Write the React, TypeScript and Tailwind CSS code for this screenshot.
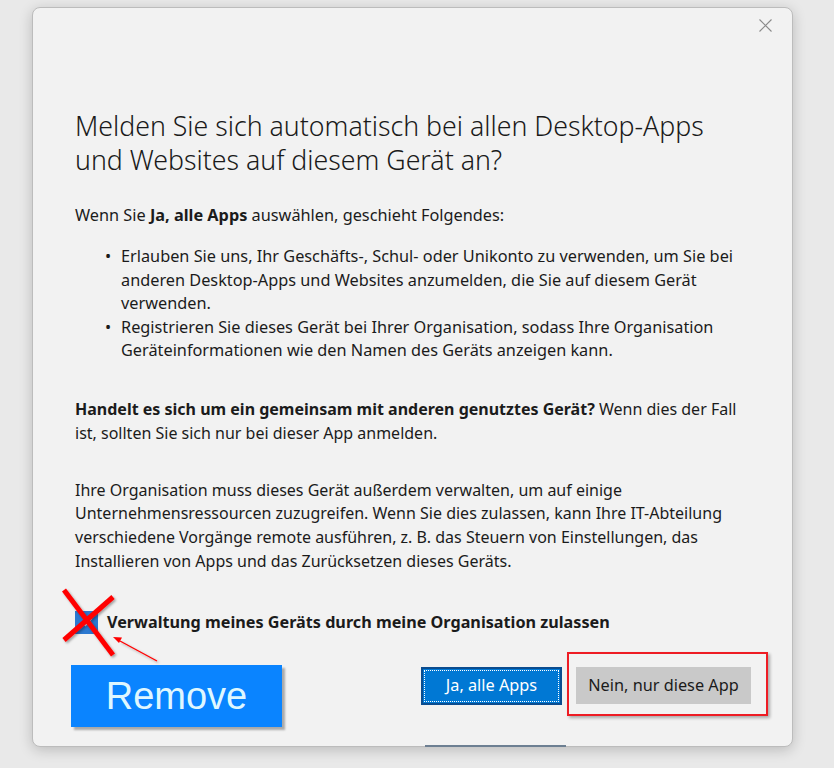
const body = "font-['Noto_Sans',sans-serif]";

function Line({ children, className = "" }: { children: React.ReactNode; className?: string }) {
  return <div className={`whitespace-nowrap ${className}`}>{children}</div>;
}

function Bullet({ lines }: { lines: string[] }) {
  return (
    <li className="flex">
      <span className="w-[16px] shrink-0 -ml-[16px]">•</span>
      <div>
        {lines.map((l) => (
          <Line key={l}>{l}</Line>
        ))}
      </div>
    </li>
  );
}

export default function App() {
  return (
    <div className={`relative w-[834px] h-[768px] overflow-hidden bg-[#e9e9e9] pt-[7px] pl-[32px] ${body} text-[#1b1b1b]`}>
      <div className="relative w-[761px] h-[740px] rounded-[8px] border border-[#bcbcbc] bg-[#f2f2f2] shadow-[0_3px_14px_rgba(0,0,0,0.2)]">
        <div className="flex justify-end pt-[11px] pr-[20px]">
          <svg width="13" height="13" viewBox="0 0 13 13" className="text-[#8a8a8a]">
            <path d="M0.5 0.5 L12.5 12.5 M12.5 0.5 L0.5 12.5" stroke="currentColor" strokeWidth="1.1" fill="none" />
          </svg>
        </div>

        <div className="pl-[42px] pr-[30px]">
          <h1 className="mt-[77px] text-[26.7px] leading-[34px] font-light text-[#1a1a1a]">
            <Line>Melden Sie sich automatisch bei allen Desktop-Apps</Line>
            <Line>und Websites auf diesem Gerät an?</Line>
          </h1>

          <div className="mt-[27px] text-[16.3px] leading-[23.5px]">
            <Line>
              Wenn Sie <b className="font-bold">Ja, alle Apps</b> auswählen, geschieht Folgendes:
            </Line>
          </div>

          <ul className="mt-[17.5px] pl-[46px] text-[16.3px] leading-[23.5px]">
            <Bullet
              lines={[
                "Erlauben Sie uns, Ihr Geschäfts-, Schul- oder Unikonto zu verwenden, um Sie bei",
                "anderen Desktop-Apps und Websites anzumelden, die Sie auf diesem Gerät",
                "verwenden.",
              ]}
            />
            <Bullet
              lines={[
                "Registrieren Sie dieses Gerät bei Ihrer Organisation, sodass Ihre Organisation",
                "Geräteinformationen wie den Namen des Geräts anzeigen kann.",
              ]}
            />
          </ul>

          <div className="mt-[34px] text-[16px] leading-[24px]">
            <Line>
              <b className="font-bold">Handelt es sich um ein gemeinsam mit anderen genutztes Gerät?</b> Wenn dies der Fall
            </Line>
            <Line>ist, sollten Sie sich nur bei dieser App anmelden.</Line>
          </div>

          <div className="mt-[34px] text-[16px] leading-[23.7px]">
            <Line>Ihre Organisation muss dieses Gerät außerdem verwalten, um auf einige</Line>
            <Line>Unternehmensressourcen zuzugreifen. Wenn Sie dies zulassen, kann Ihre IT-Abteilung</Line>
            <Line>verschiedene Vorgänge remote ausführen, z. B. das Steuern von Einstellungen, das</Line>
            <Line>Installieren von Apps und das Zurücksetzen dieses Geräts.</Line>
          </div>

          <label className="mt-[37px] flex items-center gap-[9px]">
            <span className="flex h-[23px] w-[23px] items-center justify-center bg-[#2b78d0]">
              <svg width="12" height="12" viewBox="0 0 12 12">
                <path d="M1.5 6.5 L4.5 9.5 L10.5 2.5" stroke="#dfe9f7" strokeWidth="1.3" fill="none" />
              </svg>
            </span>
            <span className="text-[16.2px] font-bold whitespace-nowrap">Verwaltung meines Geräts durch meine Organisation zulassen</span>
          </label>
        </div>

        <div className="mt-[32px] flex justify-end gap-[14px] pr-[41px]">
          <button className="relative h-[38px] w-[141px] border-2 border-[#0b4c8f] bg-[#0078d4] text-[16.3px] text-white">
            <span className="absolute inset-[1px] border border-dotted border-white" />
            Ja, alle Apps
          </button>
          <button className="h-[37px] w-[175px] bg-[#c9c9c9] text-[16.3px] text-[#1b1b1b]">Nein, nur diese App</button>
        </div>

        <div className="absolute -bottom-px left-[392px] h-[2px] w-[141px] bg-[#6d7f92]" />
      </div>

      {/* annotations */}
      <div className="absolute left-[567px] top-[652px] h-[64px] w-[201px] border-2 border-[#ee1c24] shadow-[2px_2px_3px_rgba(0,0,0,0.3)]" />

      <svg className="absolute left-0 top-0" width="834" height="768" viewBox="0 0 834 768">
        <defs>
          <filter id="sh" x="-20%" y="-20%" width="140%" height="140%">
            <feDropShadow dx="1.5" dy="1.5" stdDeviation="1" floodColor="#000" floodOpacity="0.35" />
          </filter>
        </defs>
        <g filter="url(#sh)" stroke="#ff0000" strokeLinecap="butt">
          <line x1="64" y1="590" x2="113" y2="655" strokeWidth="5" />
          <line x1="113" y1="597" x2="64" y2="640" strokeWidth="5" />
          <line x1="157" y1="661" x2="120" y2="641" strokeWidth="1.3" />
        </g>
        <path d="M113 637 L122 637.5 L119 643 Z" fill="#ff0000" />
      </svg>

      <div className="absolute left-[71px] top-[665px] flex h-[62px] w-[211px] items-center justify-center bg-[#0a84ff] shadow-[3px_3px_2px_rgba(0,0,0,0.3)]">
        <span className="font-['Liberation_Sans',Arial,sans-serif] text-[38px] leading-none text-[#dff7ff]">Remove</span>
      </div>
    </div>
  );
}
